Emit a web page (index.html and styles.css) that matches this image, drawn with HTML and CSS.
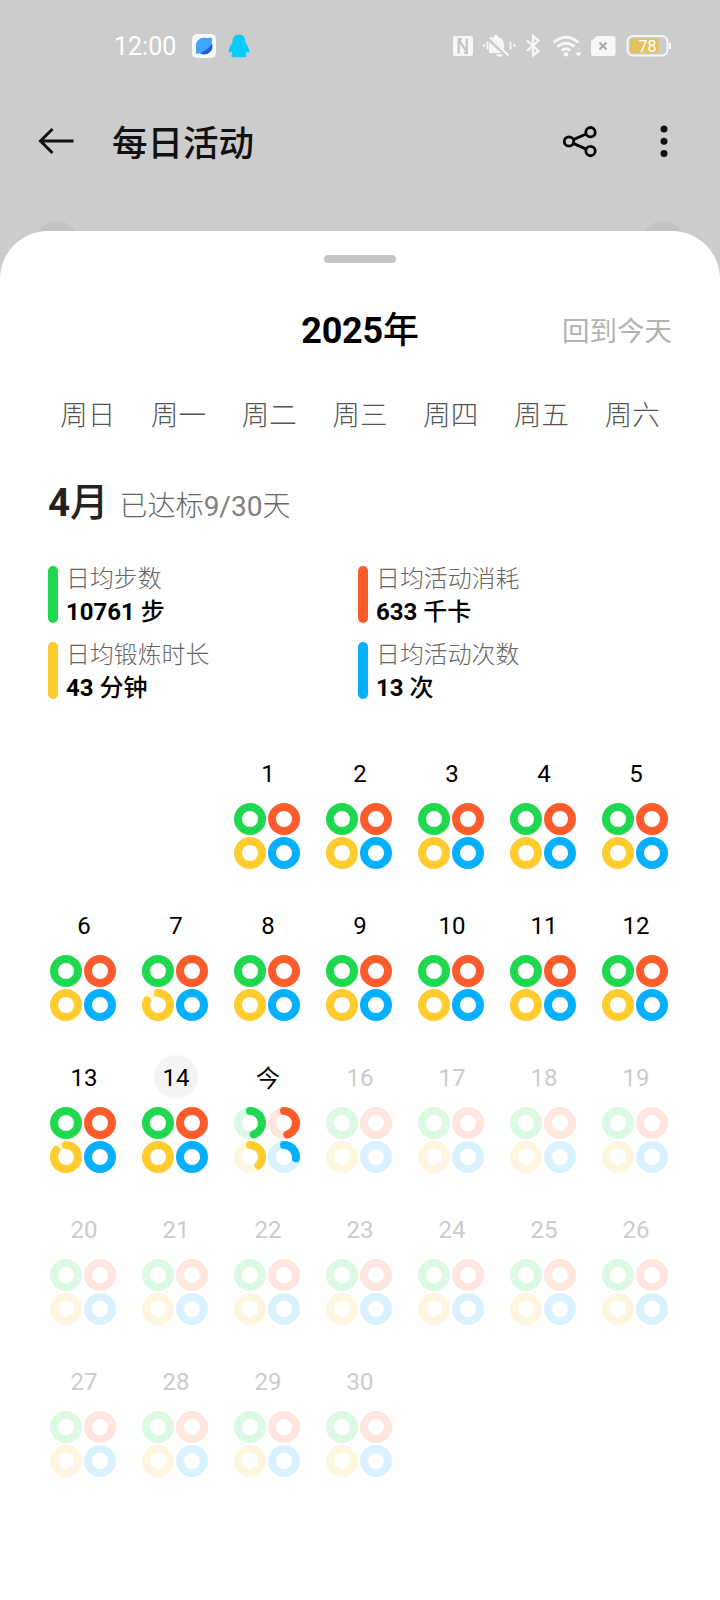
FILE: index.html
```
<!DOCTYPE html>
<html lang="zh-CN">
<head>
<meta charset="utf-8">
<title>每日活动</title>
<link rel="stylesheet" href="styles.css">
</head>
<body>
<svg class="defs" width="0" height="0">
  <defs>
    <g id="base" fill="none" stroke-width="8">
      <circle cx="16" cy="16" r="12" stroke="#dcf9e3"/>
      <circle cx="50" cy="16" r="12" stroke="#ffe6df"/>
      <circle cx="16" cy="50" r="12" stroke="#fff6df"/>
      <circle cx="50" cy="50" r="12" stroke="#d9f2ff"/>
    </g>
    <g id="three" fill="none" stroke-width="8">
      <circle cx="16" cy="16" r="12" stroke="#1fd84f"/>
      <circle cx="50" cy="16" r="12" stroke="#fc5c2c"/>
      <circle cx="50" cy="50" r="12" stroke="#03b0ff"/>
    </g>
    <g id="full" fill="none" stroke-width="8">
      <use href="#three"/>
      <circle cx="16" cy="50" r="12" stroke="#ffcb2d"/>
    </g>
  </defs>
</svg>
<div class="phone">
  <div class="status">
    <span class="clock">12:00</span>
    <svg class="app" width="24" height="24" viewBox="0 0 24 24"><rect width="24" height="24" rx="5" fill="#f8f9fb"/><circle cx="12" cy="12" r="8.200" fill="#43a5fb"/><path d="M20 9.500A8.200 8.200 0 0 1 8 19.200Q16 16 20 9.500z" fill="#1f5fdc"/><path d="M4 12v8l5-1zM14 4.500l5-1 1.200 1.500-.8 4z" fill="#43a5fb"/></svg>
    <svg class="qq" width="22" height="24" viewBox="0 0 22 24"><path d="M11 .5C6.500.5 4.500 4 4.500 8.500 3 11 .8 14 .8 17c0 2 .7 2 2.400.2.400 1.500 1 2.300 1.600 3-2.400 1-2 3 .7 3H10q1-.8 2 0h4.500c2.700 0 3.100-2 .7-3 .6-.7 1.200-1.500 1.600-3 1.700 1.800 2.400 1.800 2.400-.2 0-3-2.200-6-3.700-8.500C17.500 4 15.500.5 11 .5z" fill="#05cbff"/></svg>
    <svg class="sys" width="220" height="24" viewBox="0 0 220 24">
      <rect x="0" y="2" width="20" height="20" rx="2" fill="#f7f7f7"/>
      <path d="M5.700 19.500V6L13.800 17.500V4.500M9 5.200H5M11 18.800h4" fill="none" stroke="#c4c4c4" stroke-width="2.200"/>
      <path d="M36 18V11q0-6 5-8 0-2.200 1.700-2.200T45.500 3q5.500 2 5.500 8v5l3 3H36zM43 20.200h7q-1 2.600-3.500 2.600T43 20.200z" fill="#f7f7f7"/>
      <path d="M34 3L55 22" stroke="#ccc" stroke-width="4.500"/><path d="M37 3.500L55.500 21.500" stroke="#f7f7f7" stroke-width="2"/>
      <path d="M31 10v3M34.500 7.500v8M57.500 7.500v8M61.500 10v3" stroke="#f7f7f7" stroke-width="1.700"/>
      <path d="M74 6.500L85.500 17 80 21.500V2l5.500 4.500L74 17" fill="none" stroke="#f7f7f7" stroke-width="2.300"/>
      <g fill="none" stroke="#f7f7f7" stroke-width="2.800"><path d="M100.500 8.500q12.500-10.500 25 0M104.500 12.700q8.500-7 17 0M108.500 16.600q4.500-3.600 9 0"/></g>
      <circle cx="113" cy="20.300" r="2.300" fill="#f7f7f7"/><path d="M122 18.500h7l-3.500 4z" fill="#f7f7f7"/><path d="M123 15.500l2.500-2.500 2.500 2.500z" fill="#d9d9d9"/>
      <path d="M144 2h16a2.500 2.500 0 0 1 2.500 2.500v15A2.500 2.500 0 0 1 160 22h-19.500a2.500 2.500 0 0 1-2.500-2.500V7z" fill="#f7f7f7"/>
      <path d="M146.500 8.500l7 7M153.500 8.500l-7 7" stroke="#aaa" stroke-width="2.200"/>
      <rect x="174.500" y="2" width="40" height="19.500" rx="5.500" fill="none" stroke="#f7f7f7" stroke-width="2"/>
      <path d="M179.500 4.500h26v14.500h-26a2.500 2.500 0 0 1-2.500-2.500V7a2.500 2.500 0 0 1 2.500-2.500z" fill="#e3c15f"/>
      <path d="M217 9v6" stroke="#f7f7f7" stroke-width="2"/>
      <text class="pct" x="194.500" y="17.500" text-anchor="middle">78</text>
    </svg>
  </div>
  <div class="bar">
    <svg class="back" width="36" height="28" viewBox="0 0 36 28"><path d="M14.500 2L2.500 14l12 12M2.500 14H35.500" fill="none" stroke="#111" stroke-width="3"/></svg>
    <h1>每日活动</h1>
    <svg class="share" width="34" height="32" viewBox="0 0 34 32"><g fill="none" stroke="#000" stroke-width="2.800"><circle cx="6" cy="16.500" r="4.700"/><circle cx="27.500" cy="7.200" r="4.700"/><circle cx="27.500" cy="26" r="4.700"/><path d="M10.300 14.600l12.900-5.600M10.300 18.400l12.900 5.700"/></g></svg>
    <svg class="more" width="8" height="32" viewBox="0 0 8 32" fill="#111"><circle cx="4" cy="4" r="3.500"/><circle cx="4" cy="16.300" r="3.500"/><circle cx="4" cy="28.500" r="3.500"/></svg>
  </div>
  <div class="peeks"><i></i><i></i></div>
  <div class="sheet">
    <div class="handle"></div>
    <div class="head"><h2>2025<span>年</span></h2><a class="today">回到今天</a></div>
    <div class="week"><span>周日</span><span>周一</span><span>周二</span><span>周三</span><span>周四</span><span>周五</span><span>周六</span></div>
    <div class="month"><h3>4<span>月</span></h3><p>已达标<span>9/30</span>天</p></div>
    <div class="stats">
      <div class="stat green"><p>日均步数</p><b>10761 <span>步</span></b></div>
      <div class="stat orange"><p>日均活动消耗</p><b>633 <span>千卡</span></b></div>
      <div class="stat yellow"><p>日均锻炼时长</p><b>43 <span>分钟</span></b></div>
      <div class="stat blue"><p>日均活动次数</p><b>13 <span>次</span></b></div>
    </div>
    <div class="days">
      <div class="day first"><span>1</span><svg><use href="#full"/></svg></div>
      <div class="day"><span>2</span><svg><use href="#full"/></svg></div>
      <div class="day"><span>3</span><svg><use href="#full"/></svg></div>
      <div class="day"><span>4</span><svg><use href="#full"/></svg></div>
      <div class="day"><span>5</span><svg><use href="#full"/></svg></div>
      <div class="day"><span>6</span><svg><use href="#full"/></svg></div>
      <div class="day"><span>7</span><svg><use href="#base"/><use href="#three"/><path class="arc" stroke="#ffcb2d" d="M16 38A12 12 0 1 1 4.900 45.500"/></svg></div>
      <div class="day"><span>8</span><svg><use href="#full"/></svg></div>
      <div class="day"><span>9</span><svg><use href="#full"/></svg></div>
      <div class="day"><span>10</span><svg><use href="#full"/></svg></div>
      <div class="day"><span>11</span><svg><use href="#full"/></svg></div>
      <div class="day"><span>12</span><svg><use href="#full"/></svg></div>
      <div class="day"><span>13</span><svg><use href="#base"/><use href="#three"/><path class="arc" stroke="#ffcb2d" d="M16 38A12 12 0 1 1 6.200 43"/></svg></div>
      <div class="day selected"><span>14</span><svg><use href="#full"/></svg></div>
      <div class="day now"><span>今</span><svg><use href="#base"/><path class="arc" stroke="#1fd84f" d="M16 4A12 12 0 0 1 19.700 27.400"/><path class="arc" stroke="#fc5c2c" d="M50 4A12 12 0 0 1 53.400 27.500"/><path class="arc" stroke="#ffcb2d" d="M16 38A12 12 0 0 1 24.500 58.500"/><path class="arc" stroke="#03b0ff" d="M50 38A12 12 0 0 1 61.900 51.300"/></svg></div>
      <div class="day off"><span>16</span><svg><use href="#base"/></svg></div>
      <div class="day off"><span>17</span><svg><use href="#base"/></svg></div>
      <div class="day off"><span>18</span><svg><use href="#base"/></svg></div>
      <div class="day off"><span>19</span><svg><use href="#base"/></svg></div>
      <div class="day off"><span>20</span><svg><use href="#base"/></svg></div>
      <div class="day off"><span>21</span><svg><use href="#base"/></svg></div>
      <div class="day off"><span>22</span><svg><use href="#base"/></svg></div>
      <div class="day off"><span>23</span><svg><use href="#base"/></svg></div>
      <div class="day off"><span>24</span><svg><use href="#base"/></svg></div>
      <div class="day off"><span>25</span><svg><use href="#base"/></svg></div>
      <div class="day off"><span>26</span><svg><use href="#base"/></svg></div>
      <div class="day off"><span>27</span><svg><use href="#base"/></svg></div>
      <div class="day off"><span>28</span><svg><use href="#base"/></svg></div>
      <div class="day off"><span>29</span><svg><use href="#base"/></svg></div>
      <div class="day off"><span>30</span><svg><use href="#base"/></svg></div>
    </div>
  </div>
</div>
</body>
</html>
```
FILE: styles.css
```
* { box-sizing: border-box; margin: 0; padding: 0; }
body { width: 720px; height: 1600px; overflow: hidden; background: #ccc; font-family: Roboto, "Noto Sans CJK SC", sans-serif; color: #000; }
.defs { display: block; height: 0; }
svg { display: block; flex: none; }
.phone { display: flex; flex-direction: column; height: 1600px; }

.status { height: 91px; display: flex; align-items: center; padding-left: 114px; }
.clock { width: 78px; padding-top: 1px; font-size: 25px; font-weight: 400; color: #fff; }
.qq { margin-left: 12px; }
.sys { margin-left: 203px; }
.pct { font-size: 16px; font-weight: 400; fill: #fff; }

.bar { height: 100px; display: flex; align-items: center; padding: 0 52px 0 38px; }
.bar h1 { font-size: 35.500px; font-weight: 500; line-height: 50px; margin-left: 38px; padding-top: 5px; color: #111; }
.share { margin-left: auto; }
.more { margin-left: 63px; }

.peeks { height: 40px; padding: 30px 36px 0; display: flex; justify-content: space-between; overflow: hidden; }
.peeks i { width: 42px; height: 42px; border-radius: 50%; background: #c3c3c3; }

.sheet { flex: 1; background: #fff; border-radius: 48px 48px 0 0; }
.handle { width: 72px; height: 8px; border-radius: 4px; background: #c4c4c4; margin: 24px auto 0; }
.head { height: 132px; display: grid; grid-template-columns: 1fr auto 1fr; align-items: center; padding: 3px 48px 0; }
.head h2 { grid-column: 2; font-size: 36px; font-weight: 700; line-height: 50px; letter-spacing: -.200px; }
.head h2 span, h3 span { font-weight: 500; }
.today { justify-self: end; font-size: 27.500px; line-height: 40px; padding-top: 2px; color: #b3b3b3; }
.week { height: 40px; display: grid; grid-template-columns: repeat(7, 1fr); padding: 1px 42.500px 0; font-size: 27.500px; font-weight: 300; line-height: 40px; text-align: center; color: #555; }
.month { height: 66px; margin-top: 35px; display: flex; align-items: baseline; padding: 0 48px; }
.month h3 { font-size: 38.500px; font-weight: 700; line-height: 66px; color: #222; }
.month p { margin-left: 11px; font-size: 28px; font-weight: 300; color: #666; }
.month p span { font-weight: 400; color: #808080; }
.stats { margin-top: 30px; padding: 0 48px; display: grid; grid-template-columns: 310px 1fr; grid-auto-rows: 57px; row-gap: 19px; }
.stat { position: relative; padding: 1px 0 0 18px; }
.stat::before { content: ""; position: absolute; left: 0; top: 0; width: 10px; height: 57px; border-radius: 5px; background: currentColor; }
.stat p { font-size: 23.900px; font-weight: 300; line-height: 24px; color: #666; }
.stat b { display: block; margin-top: 9px; font-size: 24px; line-height: 24px; color: #000; }
.stat b span { font-weight: 500; }
.green { color: #1fd84f; }
.orange { color: #fc5c2c; }
.yellow { color: #ffcb2d; }
.blue { color: #03b0ff; }

.days { margin-top: 52px; padding: 0 38px; display: grid; grid-template-columns: repeat(7, 92px); grid-auto-rows: 152px; }
.day { display: flex; flex-direction: column; align-items: center; }
.first { grid-column: 3; }
.day span { width: 44px; height: 44px; border-radius: 50%; text-align: center; font-size: 24px; line-height: 46px; }
.day svg { width: 66px; height: 66px; margin: 7.500px 2px 0 0; }
.selected span { background: #f4f4f4; }
.now span { line-height: 48px; }
.off span { color: #ccc; }
.arc { fill: none; stroke-width: 8; stroke-linecap: round; }
```
